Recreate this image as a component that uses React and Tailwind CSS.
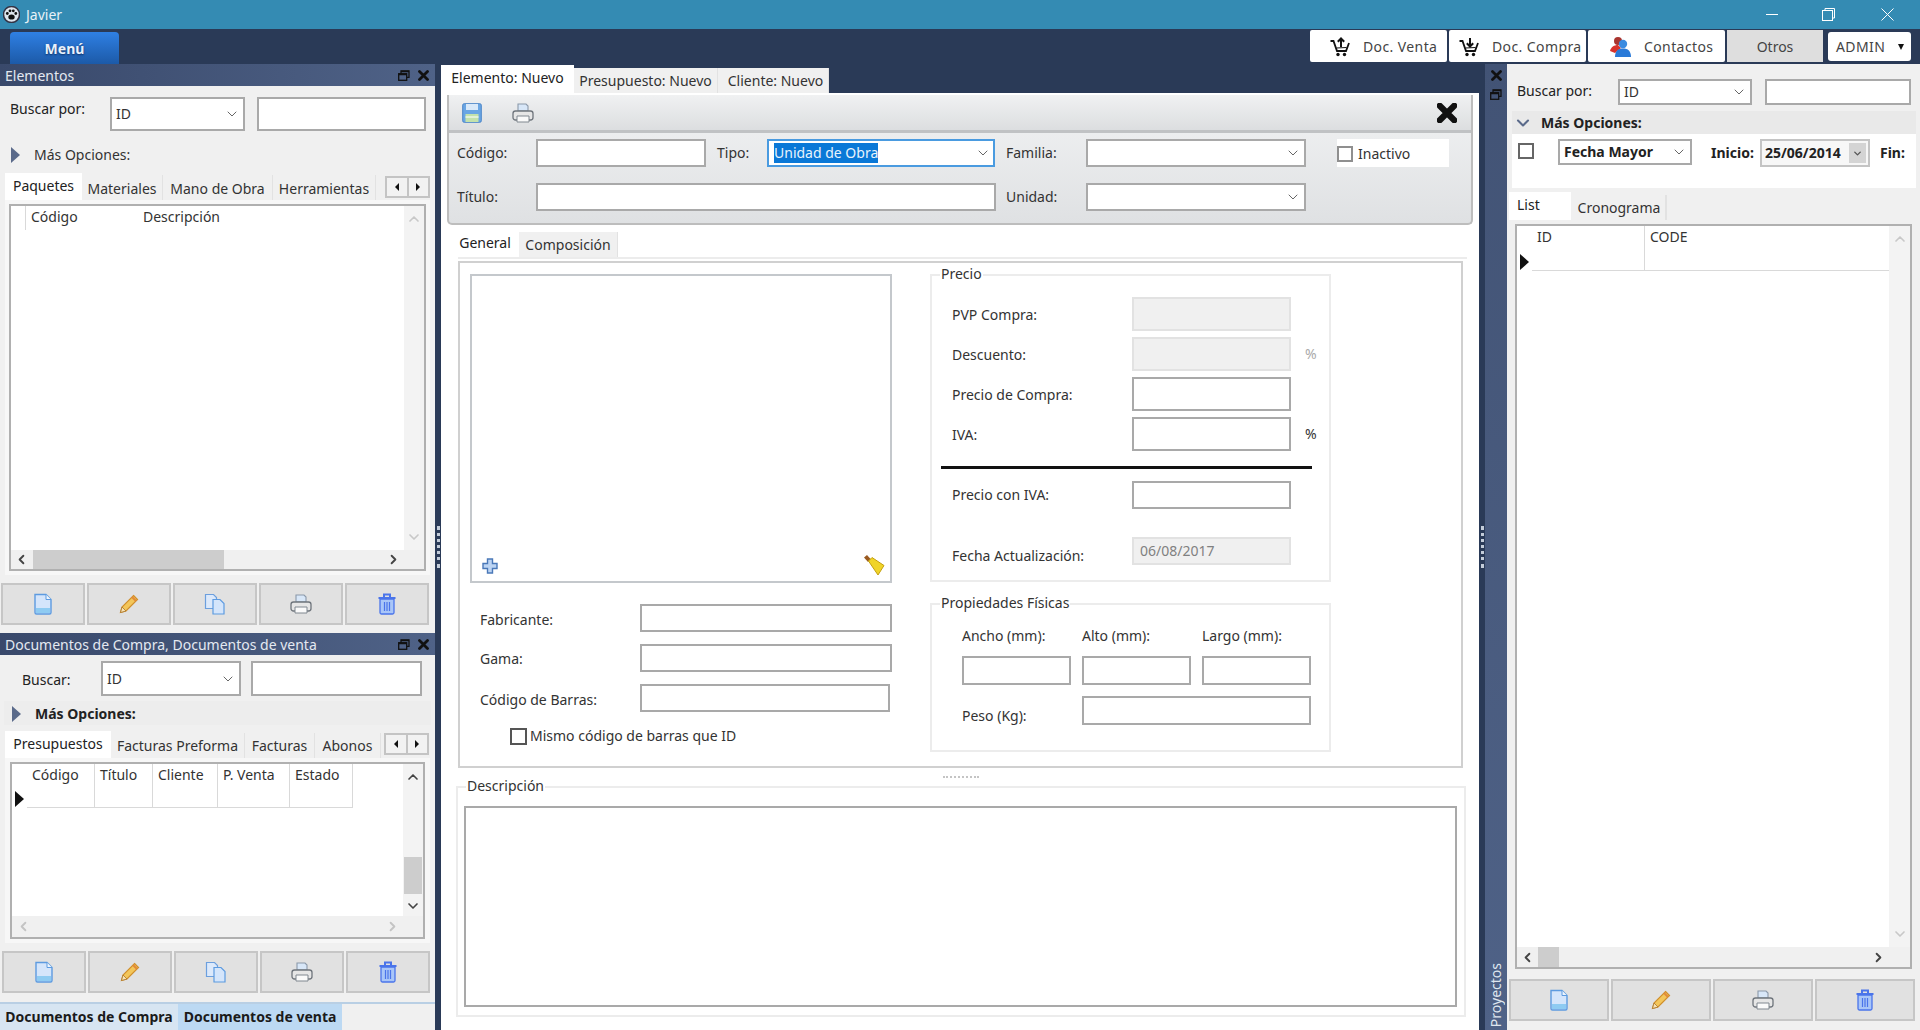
import { ChevronDown, ChevronLeft, ChevronRight, ChevronUp } from 'lucide-react'

const panelButtons = ['new', 'edit', 'copy', 'print', 'trash']

function DocIcon() {
  return (
    <svg width="20" height="22" viewBox="0 0 20 22">
      <path d="M2 1.500h11l5 5v13a1.500 1.500 0 0 1-1.500 1.500h-13A1.500 1.500 0 0 1 2 19.500z" fill="#d4e5fb" stroke="#5d9be0" strokeWidth="1.400" />
      <path d="M3 15h14v5H3z" fill="#8ecbf2" />
      <path d="M13 1.500v5h5" fill="#eef5fe" stroke="#5d9be0" />
    </svg>
  )
}

function PencilIcon() {
  return (
    <svg width="22" height="22" viewBox="0 0 22 22">
      <path d="M15.500 2.500l4 4L8 18l-5.500 1.500L4 14z" fill="#f3c65a" stroke="#d08f2c" strokeWidth="1.200" />
      <path d="M4 14l4 4-5.500 1.500z" fill="#f8e3b4" stroke="#a8742a" strokeWidth="0.800" />
      <path d="M14 4l4 4" stroke="#e28a3a" strokeWidth="2" />
    </svg>
  )
}

function CopyIcon() {
  return (
    <svg width="22" height="22" viewBox="0 0 22 22">
      <path d="M1.500 1.500h8l3 3v11h-11z" fill="#dce9fb" stroke="#6c9fde" strokeWidth="1.200" />
      <path d="M9 6.500h7l4 4v10.500H9z" fill="#d4e5fb" stroke="#5d9be0" strokeWidth="1.200" />
    </svg>
  )
}

function PrintIcon() {
  return (
    <svg width="22" height="22" viewBox="0 0 22 22">
      <path d="M6 9V2h8l2 2v5z" fill="#d8e7f8" stroke="#8b99aa" strokeWidth="1.100" />
      <rect x="1" y="9" width="20" height="9" rx="2.500" fill="#e6e6e6" stroke="#6f757c" strokeWidth="1.300" />
      <path d="M5 14h12v6H5z" fill="#fafafa" stroke="#808890" />
    </svg>
  )
}

function TrashIcon() {
  return (
    <svg width="20" height="22" viewBox="0 0 20 22">
      <path d="M1.500 5h17M7 4V1.500h6V4" fill="none" stroke="#4a74ea" strokeWidth="2" />
      <path d="M3 6h14v13.500a1.500 1.500 0 0 1-1.500 1.500h-11A1.500 1.500 0 0 1 3 19.500z" fill="#a9c6f8" stroke="#4a74ea" strokeWidth="1.300" />
      <path d="M7.500 9v9M10 9v9M12.500 9v9" stroke="#4a74ea" strokeWidth="1.200" />
    </svg>
  )
}

function PanelIcon({ name }) {
  if (name === 'new') return <DocIcon />
  if (name === 'edit') return <PencilIcon />
  if (name === 'copy') return <CopyIcon />
  if (name === 'print') return <PrintIcon />
  return <TrashIcon />
}

function SaveIcon() {
  return (
    <svg width="20" height="20" viewBox="0 0 20 20">
      <rect x="0.700" y="0.700" width="18.600" height="18.600" rx="1.500" fill="#6aa6e4" stroke="#4c86c8" />
      <rect x="4" y="1" width="12" height="6" fill="#d9e9f9" />
      <rect x="3.500" y="11" width="13" height="8" fill="#c3e2ac" />
      <path d="M3.500 14h13" stroke="#eef6e6" strokeWidth="1.500" />
    </svg>
  )
}

function CartIcon({ up }) {
  return (
    <svg width="20" height="20" viewBox="0 0 20 20" fill="none" stroke="#111">
      <path d="M0.500 4h3l3.500 10h9l3-8" strokeWidth="1.800" />
      <path d="M6.500 11l10 -0.500" strokeWidth="1.200" />
      <circle cx="8" cy="17.500" r="1.700" fill="#111" stroke="none" />
      <circle cx="14.500" cy="17.500" r="1.700" fill="#111" stroke="none" />
      <path d={up ? 'M11 10V2M7.800 4.800L11 1.500l3.200 3.300' : 'M11 1v8M7.800 6.200L11 9.500l3.200-3.300'} strokeWidth="2" />
    </svg>
  )
}

function ContactsIcon() {
  return (
    <svg width="22" height="22" viewBox="0 0 22 22">
      <circle cx="9" cy="5" r="4" fill="#a9352f" />
      <path d="M1 15c1-4 4-6 8-6l3 3-6 5z" fill="#d8332c" />
      <circle cx="14" cy="8" r="4.200" fill="#3b8be0" />
      <path d="M6 21c0-6 3-8.500 8-8.500s8 2.500 8 8.500z" fill="#2a7ad8" />
    </svg>
  )
}

function PawLogo() {
  return (
    <svg width="17" height="17" viewBox="0 0 17 17">
      <circle cx="8.500" cy="8.500" r="8" fill="#dfe6ee" stroke="#334" strokeWidth="1.500" />
      <ellipse cx="8.500" cy="11" rx="3.200" ry="2.600" fill="#111" />
      <circle cx="4.300" cy="7.500" r="1.400" fill="#111" />
      <circle cx="7" cy="4.800" r="1.400" fill="#111" />
      <circle cx="10.300" cy="4.800" r="1.400" fill="#111" />
      <circle cx="12.800" cy="7.500" r="1.400" fill="#111" />
    </svg>
  )
}

function RestoreSmall() {
  return (
    <svg width="12" height="11" viewBox="0 0 12 11" fill="none" stroke="#111" strokeWidth="1.300">
      <rect x="0.700" y="3.700" width="8" height="6.600" fill="none" />
      <path d="M3 3.500V0.800h8v6.500H9" />
      <path d="M0.700 4.500h8M3 1.500h8" strokeWidth="1.500" />
    </svg>
  )
}

function CloseSmall({ size = 11, weight = 2.800 }) {
  return (
    <svg width={size} height={size} viewBox="0 0 11 11" stroke="#111" strokeWidth={weight} strokeLinecap="round">
      <path d="M1.500 1.500l8 8M9.500 1.500l-8 8" />
    </svg>
  )
}

function Triangle({ color = 'border-l-[#5a6a8a]' }) {
  return <span className={`h-0 w-0 border-y-[8px] border-l-[9px] border-y-transparent ${color}`} />
}

function Box({ className = '', children }) {
  return <div className={`box-border border-2 border-[#a9a9a9] bg-white ${className}`}>{children}</div>
}

function Combo({ className = '', value, bold }) {
  return (
    <Box className={`flex items-center justify-between pl-1 pr-[3px] ${className}`}>
      <span className={bold ? 'font-bold text-[#222]' : 'text-[#333]'}>{value}</span>
      <ChevronDown size={16} strokeWidth={1.500} className="text-[#666]" />
    </Box>
  )
}

function Disabled({ className = '', children }) {
  return <div className={`box-border border-2 border-[#e2e2e2] bg-[#f0f0f0] ${className}`}>{children}</div>
}

function Tabs({ items, active = 0, className = '' }) {
  return (
    <div className={`flex items-end ${className}`}>
      {items.map(([label, width], i) =>
        i === active ? (
          <div key={label} className={`flex h-[27px] items-start justify-center bg-white pt-[3px] text-[#222] ${width}`}>
            {label}
          </div>
        ) : (
          <div key={label} className={`flex h-[25px] items-center justify-center border-r border-[#e2e2e2] bg-[#f0f0f0] pt-[2px] text-[#333] ${width}`}>
            {label}
          </div>
        ),
      )}
    </div>
  )
}

function TabArrows({ className = '' }) {
  return (
    <div className={`flex h-[22px] border-2 border-[#c4c4c4] bg-[#f2f2f2] ${className}`}>
      <div className="flex flex-1 items-center justify-center border-r-2 border-[#c4c4c4]">
        <span className="h-0 w-0 border-y-[4px] border-r-[4px] border-y-transparent border-r-[#111]" />
      </div>
      <div className="flex flex-1 items-center justify-center">
        <span className="h-0 w-0 border-y-[4px] border-l-[4px] border-y-transparent border-l-[#111]" />
      </div>
    </div>
  )
}

function ActionRow({ items, className = '', width }) {
  return (
    <div className={`flex gap-[2px] ${className}`}>
      {items.map(name => (
        <button key={name} className={`flex h-[42px] items-center justify-center border-2 border-[#c6c6c6] bg-[#e1e1e1] ${width}`}>
          <PanelIcon name={name} />
        </button>
      ))}
    </div>
  )
}

function DockHeader({ title }) {
  return (
    <div className="flex h-[22px] items-center justify-between bg-gradient-to-r from-[#39496b] to-[#4f6287] pl-[5px] pr-[6px] pt-[1px] text-[#e4e9f1]">
      <span>{title}</span>
      <span className="flex items-center gap-[8px]">
        <RestoreSmall />
        <CloseSmall />
      </span>
    </div>
  )
}

function ColHeader({ label, className = '' }) {
  return <div className={`h-full border-r border-[#d9d9d9] pl-[5px] pt-[1px] text-[#333] ${className}`}>{label}</div>
}

function ElementsPanel() {
  return (
    <section className="flex h-[569px] flex-col">
      <DockHeader title="Elementos" />
      <div className="flex flex-1 flex-col bg-[#f0f0f0]">
        <div className="mt-[11px] flex h-[34px] pl-[10px]">
          <span className="w-[100px] pt-[2px] text-[#222]">Buscar por:</span>
          <Combo className="w-[135px]" value="ID" />
          <Box className="ml-[12px] w-[169px]" />
        </div>
        <div className="mt-[8px] flex h-[32px] items-center pl-[11px]">
          <Triangle />
          <span className="ml-[14px] text-[#333]">Más Opciones:</span>
        </div>
        <div className="mt-[2px] flex items-start pl-[5px]">
          <Tabs
            items={[
              ['Paquetes', 'w-[77px]'],
              ['Materiales', 'w-[81px]'],
              ['Mano de Obra', 'w-[110px]'],
              ['Herramientas', 'w-[103px]'],
            ]}
          />
          <TabArrows className="ml-[9px] mt-[3px] w-[45px]" />
        </div>
        <div className="mx-[5px] flex h-[375px] flex-col bg-[#f7f7f7] p-[4px]">
          <div className="flex flex-1 flex-col border-2 border-[#b0b0b0] bg-white">
            <div className="flex flex-1">
              <div className="flex-1">
                <div className="flex h-[24px]">
                  <ColHeader className="w-[15px]" />
                  <ColHeader className="w-[112px] !border-r-0" label="Código" />
                  <ColHeader label="Descripción" className="border-r-0" />
                </div>
              </div>
              <div className="flex w-[20px] flex-col items-center justify-between bg-[#f3f3f3] py-[5px] text-[#c8c8c8]">
                <ChevronUp size={16} strokeWidth={2.500} />
                <ChevronDown size={16} strokeWidth={2.500} />
              </div>
            </div>
            <div className="flex h-[19px] items-center justify-between bg-[#f0f0f0] pl-[3px] pr-[23px]">
              <ChevronLeft size={15} strokeWidth={3} className="text-[#444]" />
              <div className="ml-[4px] mr-auto h-full w-[191px] bg-[#cdcdcd]" />
              <ChevronRight size={15} strokeWidth={3} className="text-[#444]" />
            </div>
          </div>
        </div>
        <ActionRow items={panelButtons} className="ml-[1px] mt-[8px]" width="w-[84px]" />
      </div>
    </section>
  )
}

function DocumentsPanel() {
  return (
    <section className="flex h-[369px] flex-col">
      <DockHeader title="Documentos de Compra, Documentos de venta" />
      <div className="flex flex-1 flex-col bg-[#f0f0f0]">
        <div className="mt-[6px] flex h-[35px] pl-[22px]">
          <span className="w-[79px] pt-[9px] text-[#222]">Buscar:</span>
          <Combo className="w-[140px]" value="ID" />
          <Box className="ml-[10px] w-[171px]" />
        </div>
        <div className="ml-[4px] mr-[4px] mt-[5px] flex h-[24px] items-center bg-[#ededed] pl-[8px] pt-[1px]">
          <Triangle />
          <span className="ml-[14px] font-bold text-[#222]">Más Opciones:</span>
        </div>
        <div className="mt-[6px] flex items-start pl-[5px]">
          <Tabs
            items={[
              ['Presupuestos', 'w-[106px]'],
              ['Facturas Preforma', 'w-[134px] !pt-[1px]'],
              ['Facturas', 'w-[70px] !pt-[1px]'],
              ['Abonos', 'w-[66px] !pt-[1px]'],
            ]}
          />
          <TabArrows className="ml-[3px] mt-[2px] w-[45px]" />
        </div>
        <div className="mx-[5px] flex h-[185px] flex-col bg-[#f7f7f7] px-[5px] py-[4px]">
          <div className="flex flex-1 flex-col border-2 border-[#b0b0b0] bg-white">
            <div className="flex flex-1">
              <div className="flex-1">
                <div className="flex h-[44px]">
                  <div className="flex w-[15px] items-end justify-center pb-[1px]">
                    <Triangle color="border-l-[#111]" />
                  </div>
                  <ColHeader className="w-[68px] border-b" label="Código" />
                  <ColHeader className="w-[58px] border-b" label="Título" />
                  <ColHeader className="w-[65px] border-b" label="Cliente" />
                  <ColHeader className="w-[72px] border-b" label="P. Venta" />
                  <ColHeader className="w-[63px] border-b" label="Estado" />
                </div>
              </div>
              <div className="flex w-[20px] flex-col items-center bg-[#f3f3f3] pt-[5px] text-[#444]">
                <ChevronUp size={16} strokeWidth={2.500} />
                <div className="mt-[72px] h-[37px] w-[18px] bg-[#cdcdcd]" />
                <ChevronDown size={16} strokeWidth={2.500} className="mt-[4px]" />
              </div>
            </div>
            <div className="flex h-[21px] items-center justify-between bg-[#f0f0f0] pl-[4px] pr-[23px] text-[#c4c4c4]">
              <ChevronLeft size={15} strokeWidth={3} />
              <ChevronRight size={15} strokeWidth={3} />
            </div>
          </div>
        </div>
        <ActionRow items={panelButtons} className="ml-[2px] mt-[8px]" width="w-[84px]" />
      </div>
    </section>
  )
}

function LeftColumn() {
  return (
    <aside className="flex w-[435px] flex-col">
      <ElementsPanel />
      <DocumentsPanel />
      <div className="flex h-[28px] whitespace-nowrap border-t-2 border-[#b9cfe4] bg-[#f0f0f0] text-[14px] font-bold text-[#1b1b1b]">
        <div className="flex w-[178px] items-center justify-center bg-[#d7e5f2]">Documentos de Compra</div>
        <div className="flex w-[164px] items-center justify-center bg-[#bcd9f3]">Documentos de venta</div>
      </div>
    </aside>
  )
}

function Splitter() {
  return (
    <div className="flex w-[6px] items-center justify-center">
      <div className="h-[42px] w-[3px] border-l-[3px] border-dotted border-[#c3ccd9]" />
    </div>
  )
}

function EditorHeader() {
  return (
    <div className="ml-[6px] mt-[2px] h-[130px] w-[1026px] rounded-b-[5px] border-x-2 border-b-2 border-[#bdbdbd] bg-gradient-to-b from-[#f2f3f4] to-[#dfe1e3]">
      <div className="flex h-[38px] items-center justify-between border-b-[3px] border-[#c0c2c4] bg-gradient-to-b from-[#f0f1f2] to-[#dcdee0] pl-[13px] pr-[14px] pt-[1px]">
        <span className="flex items-center gap-[30px]">
          <SaveIcon />
          <PrintIcon />
        </span>
        <CloseSmall size={20} weight={3.400} />
      </div>
      <div className="mt-[6px] flex h-[28px] items-center pl-[8px]">
        <span className="w-[79px] text-[#333]">Código:</span>
        <Box className="h-[28px] w-[170px]" />
        <span className="ml-[11px] w-[50px] text-[#333]">Tipo:</span>
        <div className="box-border flex h-[28px] w-[228px] items-center justify-between border-2 border-[#4a9be0] bg-white pl-[5px] pr-[2px]">
          <span className="bg-[#0a78d7] leading-[20px] text-[#e8f3fc]">Unidad de Obra</span>
          <ChevronDown size={16} strokeWidth={1.500} className="text-[#666]" />
        </div>
        <span className="ml-[11px] w-[80px] text-[#333]">Familia:</span>
        <Combo className="h-[28px] w-[220px]" />
        <div className="ml-[31px] flex h-[28px] w-[112px] items-center bg-white pt-[1px]">
          <span className="h-[16px] w-[16px] border-2 border-[#8f8f8f] bg-white" />
          <span className="ml-[5px] text-[#333]">Inactivo</span>
        </div>
      </div>
      <div className="mt-[16px] flex h-[28px] items-center pl-[8px]">
        <span className="w-[79px] text-[#333]">Título:</span>
        <Box className="h-[28px] w-[460px]" />
        <span className="ml-[10px] w-[80px] text-[#333]">Unidad:</span>
        <Combo className="h-[28px] w-[220px]" />
      </div>
    </div>
  )
}

function PriceRow({ label, mt, children, unit, unitClass = '' }) {
  return (
    <div className={`flex h-[34px] items-center ${mt}`}>
      <span className="w-[200px] pl-[20px] pt-[1px] text-[#333]">{label}</span>
      {children}
      {unit && <span className={`ml-[14px] ${unitClass}`}>{unit}</span>}
    </div>
  )
}

function Legend({ children }) {
  return <span className="absolute -top-[12px] left-[8px] bg-white px-[1px] text-[#333]">{children}</span>
}

function PriceGroup() {
  return (
    <div className="relative box-border h-[308px] w-[401px] border-2 border-[#ececec] pt-[21px]">
      <Legend>Precio</Legend>
      <PriceRow label="PVP Compra:" mt="">
        <Disabled className="h-[34px] w-[159px]" />
      </PriceRow>
      <PriceRow label="Descuento:" mt="mt-[6px]" unit="%" unitClass="text-[#aaa]">
        <Disabled className="h-[34px] w-[159px]" />
      </PriceRow>
      <PriceRow label="Precio de Compra:" mt="mt-[6px]">
        <Box className="h-[34px] w-[159px]" />
      </PriceRow>
      <PriceRow label="IVA:" mt="mt-[6px]" unit="%" unitClass="text-[#333]">
        <Box className="h-[34px] w-[159px]" />
      </PriceRow>
      <div className="ml-[9px] mt-[15px] h-[3px] w-[371px] bg-[#111]" />
      <div className="mt-[12px] flex h-[28px] items-center">
        <span className="w-[200px] pl-[20px] text-[#333]">Precio con IVA:</span>
        <Box className="h-[28px] w-[159px]" />
      </div>
      <div className="mt-[28px] flex h-[28px] items-center">
        <span className="w-[200px] pl-[20px] pt-[9px] text-[#333]">Fecha Actualización:</span>
        <Disabled className="flex h-[28px] w-[159px] items-center pl-[6px] text-[#808080]">06/08/2017</Disabled>
      </div>
    </div>
  )
}

function PhysicalGroup() {
  return (
    <div className="relative mt-[21px] box-border h-[149px] w-[401px] border-2 border-[#ececec] pl-[30px] pr-[10px] pt-[21px]">
      <Legend>Propiedades Físicas</Legend>
      <div className="flex gap-[11px] text-[#333]">
        <span className="w-[109px] leading-[20px]">Ancho (mm):</span>
        <span className="w-[109px] leading-[20px]">Alto (mm):</span>
        <span className="w-[109px] leading-[20px]">Largo (mm):</span>
      </div>
      <div className="mt-[10px] flex gap-[11px]">
        <Box className="h-[29px] w-[109px]" />
        <Box className="h-[29px] w-[109px]" />
        <Box className="h-[29px] w-[109px]" />
      </div>
      <div className="mt-[11px] flex">
        <span className="w-[120px] pt-[10px] text-[#333]">Peso (Kg):</span>
        <Box className="h-[29px] w-[229px]" />
      </div>
    </div>
  )
}

function GeneralTab() {
  return (
    <div className="ml-[17px] box-border flex h-[507px] w-[1005px] border-2 border-[#d0d0d0] pl-[10px] pt-[11px]">
      <div className="w-[422px]">
        <div className="relative h-[309px] border-2 border-[#c4c8cc]">
          <svg className="absolute bottom-[7px] left-[10px]" width="16" height="16" viewBox="0 0 16 16">
            <path d="M5.500 1h5v4.500H15v5h-4.500V15h-5v-4.500H1v-5h4.500z" fill="#bcd4f3" stroke="#4a78b8" strokeWidth="1.400" />
          </svg>
          <svg className="absolute bottom-[5px] right-[5px]" width="22" height="22" viewBox="0 0 22 22">
            <path d="M1 3.500l3-2.500 4 4.500-3 2.500z" fill="#9a5a20" />
            <path d="M5.500 7L9 3.500 21 11.500 15 21z" fill="#f0d428" stroke="#c4a010" />
          </svg>
        </div>
        <div className="mt-[21px] flex flex-col gap-[12px]">
          <div className="flex h-[28px] items-center">
            <span className="w-[170px] pl-[10px] pt-[3px] text-[#333]">Fabricante:</span>
            <Box className="h-[28px] w-[252px]" />
          </div>
          <div className="flex h-[28px] items-center">
            <span className="w-[170px] pl-[10px] pt-[2px] text-[#333]">Gama:</span>
            <Box className="h-[28px] w-[252px]" />
          </div>
          <div className="flex h-[28px] items-center">
            <span className="w-[170px] pl-[10px] pt-[3px] text-[#333]">Código de Barras:</span>
            <Box className="h-[28px] w-[250px]" />
          </div>
        </div>
        <div className="ml-[40px] mt-[15px] flex h-[18px] items-center">
          <span className="h-[17px] w-[17px] border-2 border-[#555] bg-white" />
          <span className="ml-[3px] text-[#333]">Mismo código de barras que ID</span>
        </div>
      </div>
      <div className="ml-[38px]">
        <PriceGroup />
        <PhysicalGroup />
      </div>
    </div>
  )
}

function EditorColumn() {
  return (
    <main className="flex w-[1038px] flex-col pt-[1px]">
      <Tabs
        items={[
          ['Elemento: Nuevo', 'w-[133px] !h-[28px]'],
          ['Presupuesto: Nuevo', 'w-[144px] !pt-[1px]'],
          ['Cliente: Nuevo', 'w-[111px] pl-[5px] !pt-[1px]'],
        ]}
      />
      <div className="flex-1 bg-white">
        <EditorHeader />
        <div className="ml-[10px] mt-[5px]">
          <Tabs
            items={[
              ['General', 'w-[68px]'],
              ['Composición', 'w-[99px] !pt-[1px]'],
            ]}
          />
        </div>
        <div className="ml-[17px] h-[4px] w-[1009px] border-t-2 border-[#ececec]" />
        <GeneralTab />
        <div className="flex h-[18px] items-center pl-[502px]">
          <span className="h-[2px] w-[36px] border-t-2 border-dotted border-[#c4c4c4]" />
        </div>
        <div className="relative ml-[15px] box-border h-[231px] w-[1010px] border-2 border-[#ececec] pl-[6px] pr-[7px] pt-[18px]">
          <Legend>Descripción</Legend>
          <Box className="h-[201px] w-full" />
        </div>
      </div>
    </main>
  )
}

function ProjectsStrip() {
  return (
    <div className="flex w-[22px] flex-col items-center bg-gradient-to-t from-[#4f6287] to-[#425375] pb-[3px] pt-[6px] text-[#dfe6ef]">
      <CloseSmall />
      <span className="mt-[8px]">
        <RestoreSmall />
      </span>
      <span className="mt-auto rotate-180 text-[14px] [writing-mode:vertical-rl]">Proyectos</span>
    </div>
  )
}

function RightColumn() {
  return (
    <aside className="flex w-[413px] flex-col bg-[#f0f0f0]">
      <div className="mt-[15px] flex h-[26px] pl-[10px]">
        <span className="w-[101px] pt-[2px] text-[#222]">Buscar por:</span>
        <Combo className="w-[134px]" value="ID" />
        <Box className="ml-[13px] w-[146px]" />
      </div>
      <div className="ml-[5px] mt-[6px] w-[404px]">
        <div className="flex h-[23px] items-center bg-[#e9e9e9] pl-[1px]">
          <ChevronDown size={20} strokeWidth={2.500} className="text-[#5a6a8a]" />
          <span className="ml-[8px] font-bold text-[#222]">Más Opciones:</span>
        </div>
        <div className="flex h-[54px] items-start bg-white pl-[6px] pt-[5px]">
          <span className="mt-[4px] h-[16px] w-[16px] border-2 border-[#666] bg-white" />
          <Combo className="ml-[24px] h-[26px] w-[134px]" value="Fecha Mayor" bold />
          <span className="ml-[19px] mt-[4px] w-[49px] font-bold text-[#222]">Inicio:</span>
          <div className="box-border flex h-[28px] w-[110px] items-center justify-between border-2 border-[#c4c4c4] bg-[#f7f7f7] pl-[3px] pr-[2px] font-bold text-[#222]">
            <span>25/06/2014</span>
            <span className="flex h-[20px] w-[17px] items-center justify-center bg-[#d4d4d4]">
              <ChevronDown size={11} strokeWidth={3} className="text-[#555]" />
            </span>
          </div>
          <span className="ml-[10px] mt-[4px] font-bold text-[#222]">Fin:</span>
        </div>
      </div>
      <Tabs
        className="ml-[2px] mt-[4px]"
        items={[
          ['List', 'w-[62px] !h-[28px] !justify-start pl-[8px]'],
          ['Cronograma', 'w-[96px] !border-r-2 pl-[2px] !pt-[1px]'],
        ]}
      />
      <div className="mx-[8px] mt-[4px] flex h-[745px] w-[397px] flex-col border-2 border-[#b0b0b0] bg-white">
        <div className="flex flex-1">
          <div className="flex h-[45px] flex-1">
            <div className="flex w-[15px] items-end justify-center pb-[1px]">
              <Triangle color="border-l-[#111]" />
            </div>
            <ColHeader className="w-[113px] border-b" label="ID" />
            <ColHeader className="w-[244px] border-b !border-r-0" label="CODE" />
          </div>
          <div className="flex w-[23px] flex-col items-center justify-between bg-[#f3f3f3] py-[5px] text-[#c8c8c8]">
            <ChevronUp size={16} strokeWidth={2.500} />
            <ChevronDown size={16} strokeWidth={2.500} />
          </div>
        </div>
        <div className="flex h-[20px] items-center justify-between bg-[#f0f0f0] pl-[3px] pr-[24px] text-[#444]">
          <ChevronLeft size={15} strokeWidth={3} />
          <div className="ml-[3px] mr-auto h-full w-[21px] bg-[#cdcdcd]" />
          <ChevronRight size={15} strokeWidth={3} />
        </div>
      </div>
      <ActionRow items={['new', 'edit', 'print', 'trash']} className="ml-[2px] mt-[10px]" width="w-[100px]" />
    </aside>
  )
}

function TopButton({ icon, label, className = '' }) {
  return (
    <div className={`flex h-[32px] items-center rounded-[2px] bg-white pt-[1px] text-[#444] ${className}`}>
      {icon}
      <span className="ml-[13px] tracking-[0.4px]">{label}</span>
    </div>
  )
}

export default function App() {
  return (
    <div className="flex h-[1030px] w-[1920px] flex-col overflow-hidden bg-[#2a3a57] font-['Noto_Sans',sans-serif] text-[14px] leading-[20px]">
      <header className="flex h-[29px] items-center justify-between bg-[#348bb3] pl-[3px] text-white">
        <span className="flex items-center gap-[6px]">
          <PawLogo />
          <span className="text-[#e8f2f7]">Javier</span>
        </span>
        <span className="flex items-center">
          <span className="mr-[44px] h-[1px] w-[12px] bg-white" />
          <svg className="mr-[46px]" width="13" height="13" viewBox="0 0 13 13" fill="none" stroke="white">
            <rect x="0.500" y="2.500" width="10" height="10" />
            <path d="M3 2.500V0.500h9.500V10h-2" />
          </svg>
          <svg className="mr-[26px]" width="13" height="13" viewBox="0 0 13 13" stroke="white">
            <path d="M0.500 0.500l12 12M12.500 0.500l-12 12" />
          </svg>
        </span>
      </header>
      <nav className="flex h-[35px] justify-between pl-[10px] pr-[9px]">
        <div className="mt-[3px] flex h-[32px] w-[109px] items-center justify-center rounded-t-[4px] bg-gradient-to-b from-[#2f80e4] to-[#1c5aa8] pt-[2px] font-bold text-[#e9f1fb] [text-shadow:0_1px_2px_#0b2f66]">
          Menú
        </div>
        <div className="mt-[1px] flex gap-[2px]">
          <TopButton icon={<CartIcon up />} label="Doc. Venta" className="w-[137px] pl-[20px]" />
          <TopButton icon={<CartIcon />} label="Doc. Compra" className="w-[137px] pl-[10px]" />
          <TopButton icon={<ContactsIcon />} label="Contactos" className="w-[137px] pl-[21px]" />
          <div className="flex h-[32px] w-[96px] items-center justify-center bg-[#dedede] pt-[1px] text-[#444]">Otros</div>
          <div className="ml-[3px] mt-[2px] flex h-[29px] w-[83px] items-center justify-between rounded-[3px] bg-white pl-[8px] pr-[7px] text-[#444]">
            <span className="tracking-[0.4px]">ADMIN</span>
            <span className="h-0 w-0 border-x-[3.500px] border-t-[6px] border-x-transparent border-t-[#111]" />
          </div>
        </div>
      </nav>
      <div className="flex flex-1 overflow-hidden">
        <LeftColumn />
        <Splitter />
        <EditorColumn />
        <Splitter />
        <ProjectsStrip />
        <RightColumn />
      </div>
    </div>
  )
}
